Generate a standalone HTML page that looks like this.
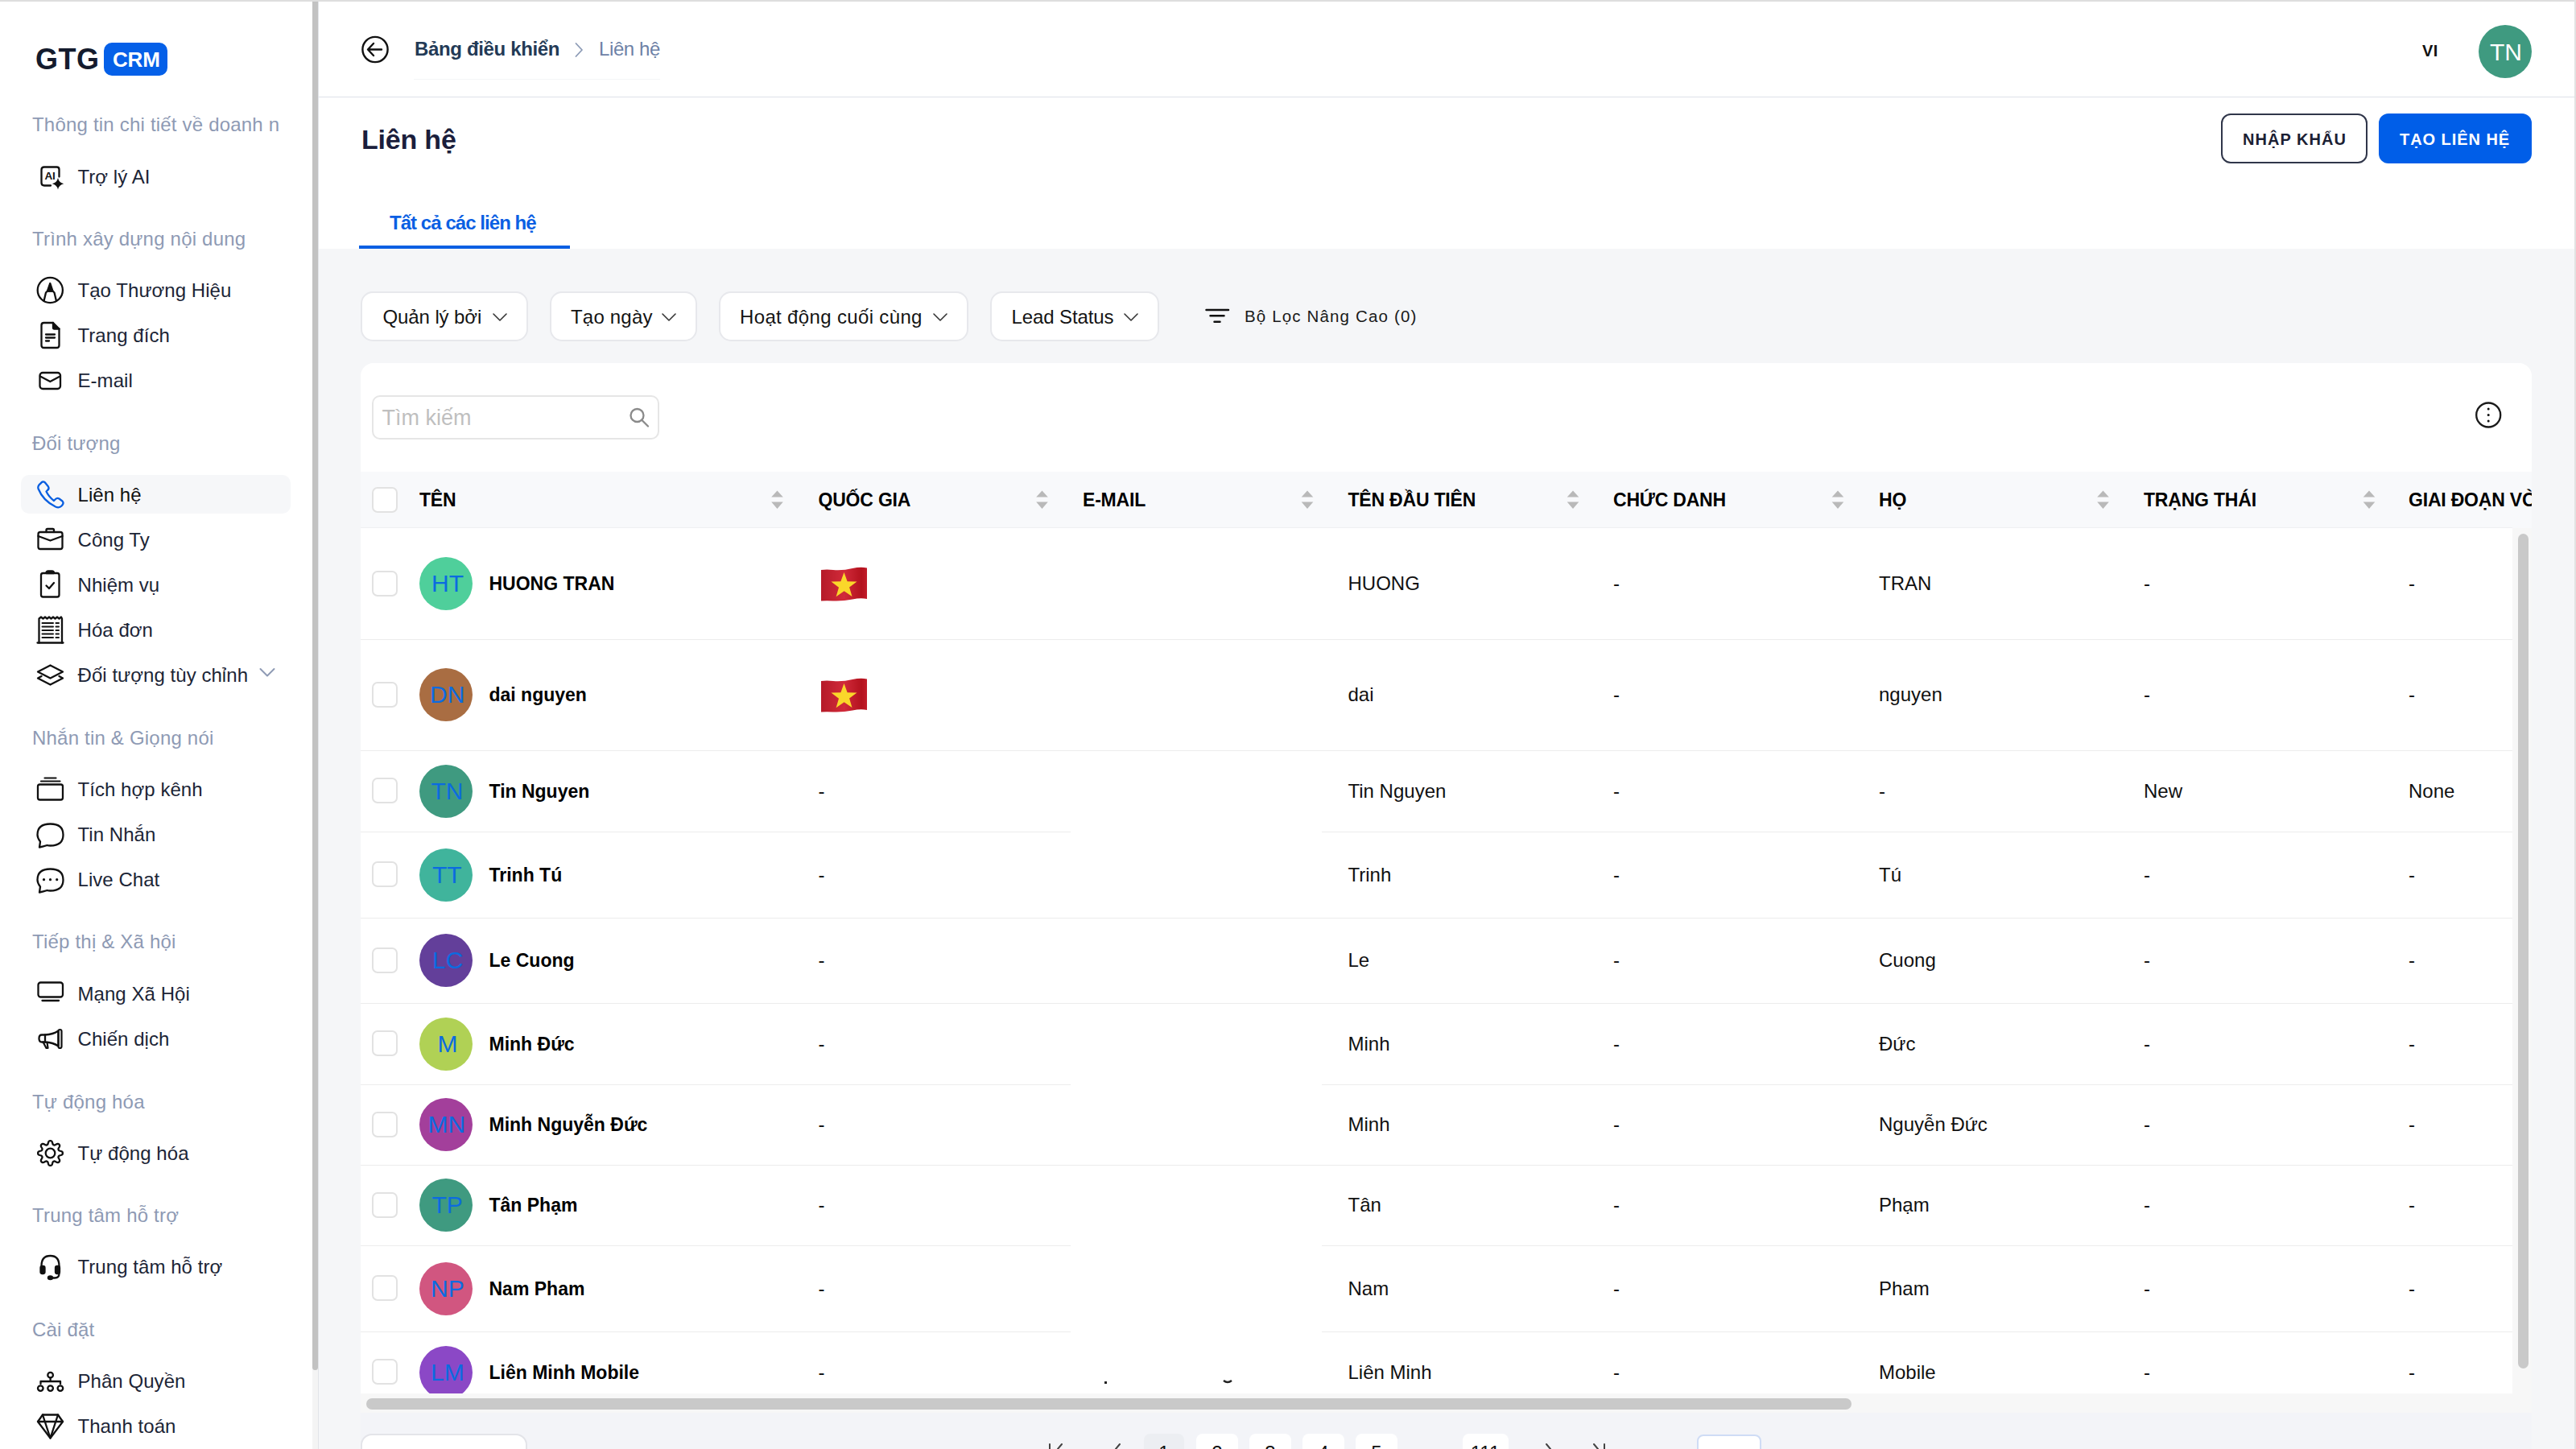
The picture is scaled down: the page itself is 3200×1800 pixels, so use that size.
<!DOCTYPE html>
<html><head><meta charset="utf-8"><title>Liên hệ - GTG CRM</title>
<style>
html,body{margin:0;padding:0;width:3200px;height:1800px;overflow:hidden;background:#fff}
body{position:relative;font-family:"Liberation Sans", sans-serif}
.a{position:absolute}
.t{position:absolute;white-space:nowrap}
</style></head><body>
<div class="a" style="left:0px;top:0px;width:3200px;height:1800px;background:#fff"></div>
<div class="a" style="left:396px;top:309px;width:2802px;height:1491px;background:#f5f6f8"></div>
<div class="a" style="left:0px;top:0px;width:3200px;height:2px;background:#dedede"></div>
<div class="a" style="left:3198px;top:0px;width:2px;height:1800px;background:#e2e2e2"></div>
<div class="a" style="left:388px;top:2px;width:7px;height:1798px;background:#f4f4f4"></div>
<div class="a" style="left:395px;top:2px;width:1px;height:1798px;background:#e2e4e9"></div>
<div class="a" style="left:388px;top:2px;width:7px;height:1700px;background:#c2c2c2;border-radius:0 0 4px 4px"></div>
<div class="t" style="left:44.0px;top:56.1px;font-size:36px;line-height:36px;font-weight:700;color:#141b2d;letter-spacing:0.5px;">GTG</div>
<div class="a" style="left:129px;top:53px;width:79px;height:41px;background:#0560e8;border-radius:10px"></div>
<div class="t" style="left:140.0px;top:61.0px;font-size:26px;line-height:26px;font-weight:700;color:#fff;letter-spacing:-0.2px;">CRM</div>
<div class="t" style="left:40.0px;top:142.8px;font-size:24px;line-height:24px;font-weight:400;color:#8e9ab4;letter-spacing:0.2px;">Thông tin chi tiết về doanh n</div>
<div class="t" style="left:96.5px;top:207.6px;font-size:24px;line-height:24px;font-weight:400;color:#1c2536;letter-spacing:0.05px;">Trợ lý AI</div>
<div class="t" style="left:40.0px;top:284.8px;font-size:24px;line-height:24px;font-weight:400;color:#8e9ab4;letter-spacing:0.2px;">Trình xây dựng nội dung</div>
<div class="t" style="left:96.5px;top:348.8px;font-size:24px;line-height:24px;font-weight:400;color:#1c2536;letter-spacing:0.05px;">Tạo Thương Hiệu</div>
<div class="t" style="left:96.5px;top:404.6px;font-size:24px;line-height:24px;font-weight:400;color:#1c2536;letter-spacing:0.05px;">Trang đích</div>
<div class="t" style="left:96.5px;top:460.6px;font-size:24px;line-height:24px;font-weight:400;color:#1c2536;letter-spacing:0.05px;">E-mail</div>
<div class="t" style="left:40.0px;top:538.8px;font-size:24px;line-height:24px;font-weight:400;color:#8e9ab4;letter-spacing:0.2px;">Đối tượng</div>
<div class="a" style="left:26px;top:590px;width:335px;height:48px;background:#f6f7f9;border-radius:10px"></div>
<div class="t" style="left:96.5px;top:602.9px;font-size:24px;line-height:24px;font-weight:400;color:#111;letter-spacing:0.05px;">Liên hệ</div>
<div class="t" style="left:96.5px;top:659.3px;font-size:24px;line-height:24px;font-weight:400;color:#1c2536;letter-spacing:0.05px;">Công Ty</div>
<div class="t" style="left:96.5px;top:715.3px;font-size:24px;line-height:24px;font-weight:400;color:#1c2536;letter-spacing:0.05px;">Nhiệm vụ</div>
<div class="t" style="left:96.5px;top:770.8px;font-size:24px;line-height:24px;font-weight:400;color:#1c2536;letter-spacing:0.05px;">Hóa đơn</div>
<div class="t" style="left:96.5px;top:826.6px;font-size:24px;line-height:24px;font-weight:400;color:#1c2536;letter-spacing:0.05px;">Đối tượng tùy chỉnh</div>
<div class="t" style="left:40.0px;top:904.5px;font-size:24px;line-height:24px;font-weight:400;color:#8e9ab4;letter-spacing:0.2px;">Nhắn tin &amp; Giọng nói</div>
<div class="t" style="left:96.5px;top:968.8px;font-size:24px;line-height:24px;font-weight:400;color:#1c2536;letter-spacing:0.05px;">Tích hợp kênh</div>
<div class="t" style="left:96.5px;top:1024.8px;font-size:24px;line-height:24px;font-weight:400;color:#1c2536;letter-spacing:0.05px;">Tin Nhắn</div>
<div class="t" style="left:96.5px;top:1080.8px;font-size:24px;line-height:24px;font-weight:400;color:#1c2536;letter-spacing:0.05px;">Live Chat</div>
<div class="t" style="left:40.0px;top:1158.3px;font-size:24px;line-height:24px;font-weight:400;color:#8e9ab4;letter-spacing:0.2px;">Tiếp thị &amp; Xã hội</div>
<div class="t" style="left:96.5px;top:1222.8px;font-size:24px;line-height:24px;font-weight:400;color:#1c2536;letter-spacing:0.05px;">Mạng Xã Hội</div>
<div class="t" style="left:96.5px;top:1278.9px;font-size:24px;line-height:24px;font-weight:400;color:#1c2536;letter-spacing:0.05px;">Chiến dịch</div>
<div class="t" style="left:40.0px;top:1356.5px;font-size:24px;line-height:24px;font-weight:400;color:#8e9ab4;letter-spacing:0.2px;">Tự động hóa</div>
<div class="t" style="left:96.5px;top:1420.8px;font-size:24px;line-height:24px;font-weight:400;color:#1c2536;letter-spacing:0.05px;">Tự động hóa</div>
<div class="t" style="left:40.0px;top:1498.0px;font-size:24px;line-height:24px;font-weight:400;color:#8e9ab4;letter-spacing:0.2px;">Trung tâm hỗ trợ</div>
<div class="t" style="left:96.5px;top:1561.8px;font-size:24px;line-height:24px;font-weight:400;color:#1c2536;letter-spacing:0.05px;">Trung tâm hỗ trợ</div>
<div class="t" style="left:40.0px;top:1640.0px;font-size:24px;line-height:24px;font-weight:400;color:#8e9ab4;letter-spacing:0.2px;">Cài đặt</div>
<div class="t" style="left:96.5px;top:1703.8px;font-size:24px;line-height:24px;font-weight:400;color:#1c2536;letter-spacing:0.05px;">Phân Quyền</div>
<div class="t" style="left:96.5px;top:1759.9px;font-size:24px;line-height:24px;font-weight:400;color:#1c2536;letter-spacing:0.05px;">Thanh toán</div>
<svg class="a" style="left:40px;top:195px;" width="50" height="45" viewBox="40 195 50 45" fill="none" stroke="#111" stroke-width="2.3" stroke-linecap="round" stroke-linejoin="round"><path d="M63 230.5 H55 Q51.5 230.5 51.5 227 V211 Q51.5 207.5 55 207.5 H70.5 Q73.5 207.5 73.5 210.5 V219.5"/><text x="55.6" y="223.3" font-family="Liberation Sans" font-size="13.5" font-weight="700" fill="#111" stroke="none" letter-spacing="-0.3">AI</text><path d="M72 221 Q73.3 227 79.2 228.2 Q73.3 229.4 72 235.4 Q70.7 229.4 64.8 228.2 Q70.7 227 72 221Z" fill="#111" stroke="none"/></svg>
<svg class="a" style="left:40px;top:340px;" width="50" height="45" viewBox="40 340 50 45" fill="none" stroke="#111" stroke-width="2.3" stroke-linecap="round" stroke-linejoin="round"><circle cx="62.3" cy="360.5" r="15.6"/><path d="M54.5 374 L57 363.5 L59 361.5 H65.5 L67.5 363.5 L70 374"/><path d="M59 361.5 L62.3 352 L65.5 361.5Z" fill="#111"/></svg>
<svg class="a" style="left:40px;top:395px;" width="50" height="45" viewBox="40 395 50 45" fill="none" stroke="#111" stroke-width="2.3" stroke-linecap="round" stroke-linejoin="round"><path d="M56 401 H66 L73.5 408.5 V429 Q73.5 432 70.5 432 H54.5 Q51.5 432 51.5 429 V404 Q51.5 401 54.5 401Z"/><path d="M66 401 V407 Q66 408.5 67.5 408.5 H73.5" fill="#111"/><path d="M57 415.5 H68 M57 419.5 H68 M57 423.5 H61"/></svg>
<svg class="a" style="left:40px;top:455px;" width="50" height="35" viewBox="40 455 50 35" fill="none" stroke="#111" stroke-width="2.3" stroke-linecap="round" stroke-linejoin="round"><rect x="49.5" y="463" width="25.5" height="20" rx="3.5"/><path d="M50 467.5 L62.3 474 L74.5 467.5"/></svg>
<svg class="a" style="left:40px;top:592px;" width="50" height="45" viewBox="40 592 50 45" fill="none" stroke="#111" stroke-width="2.3" stroke-linecap="round" stroke-linejoin="round"><path d="M50.5 600.5 Q53 597 56 599.5 L60 604.5 Q61.5 607 59 609 L57.5 610.5 Q60.5 617 67 622 L69 620 Q71 618 73.5 619.5 L77.5 622.5 Q80 625 76.5 628.5 Q73.5 631.5 69 629.5 Q53.5 622 47.5 607 Q46.5 603.5 50.5 600.5Z" stroke="#0a5fe0"/></svg>
<svg class="a" style="left:40px;top:650px;" width="50" height="40" viewBox="40 650 50 40" fill="none" stroke="#111" stroke-width="2.3" stroke-linecap="round" stroke-linejoin="round"><rect x="47.5" y="661" width="30" height="21" rx="2.5"/><path d="M57.5 661 V658.5 Q57.5 657 59 657 H65.5 Q67 657 67 658.5 V661"/><path d="M47.5 666 L62.5 671.5 L77.5 666"/></svg>
<svg class="a" style="left:40px;top:705px;" width="50" height="45" viewBox="40 705 50 45" fill="none" stroke="#111" stroke-width="2.3" stroke-linecap="round" stroke-linejoin="round"><rect x="51" y="712" width="22.5" height="29.5" rx="2.5"/><path d="M57.5 712 Q57.5 709.5 60 709.5 H64.5 Q67 709.5 67 712Z" fill="#111"/><path d="M57.5 727.5 L61 731 L67 724"/></svg>
<svg class="a" style="left:40px;top:762px;" width="50" height="42" viewBox="40 762 50 42" fill="none" stroke="#111" stroke-width="2.3" stroke-linecap="round" stroke-linejoin="round"><path d="M48.5 798.5 V768.5 L51 766.5 L53.5 768.5 L56 766.5 L58.5 768.5 L61 766.5 L63.5 768.5 L66 766.5 L68.5 768.5 L71 766.5 L73.5 768.5 L76 766.5 L77 768.5 V798.5"/><path d="M46.5 798.5 H78.5"/><path d="M52.5 774 H66 M52.5 778.5 H66 M52.5 783 H66 M52.5 787.5 H66 M52.5 792 H66 M69.5 774 H73 M69.5 778.5 H73 M69.5 783 H73 M69.5 787.5 H73 M69.5 792 H73" stroke-width="2"/></svg>
<svg class="a" style="left:40px;top:820px;" width="50" height="38" viewBox="40 820 50 38" fill="none" stroke="#111" stroke-width="2.3" stroke-linecap="round" stroke-linejoin="round"><path d="M62.5 826.5 L78 834.5 L62.5 842.5 L47 834.5Z"/><path d="M51.5 840 L47 842.5 L62.5 850.5 L78 842.5 L73.5 840"/></svg>
<svg class="a" style="left:315px;top:825px;" width="35" height="25" viewBox="315 825 35 25" fill="none" stroke="#111" stroke-width="2.3" stroke-linecap="round" stroke-linejoin="round"><path d="M323.5 831 L332 839.5 L340.5 831" stroke="#8e9ab4" stroke-width="2"/></svg>
<svg class="a" style="left:40px;top:960px;" width="50" height="40" viewBox="40 960 50 40" fill="none" stroke="#111" stroke-width="2.3" stroke-linecap="round" stroke-linejoin="round"><rect x="47" y="974.5" width="31" height="19" rx="2.5"/><path d="M55.5 966.5 H69.5 M51 970.5 H74.5" stroke-width="2.2"/></svg>
<svg class="a" style="left:40px;top:1018px;" width="50" height="40" viewBox="40 1018 50 40" fill="none" stroke="#111" stroke-width="2.3" stroke-linecap="round" stroke-linejoin="round"><path d="M50 1045.5 Q46.5 1041 46.5 1037 Q46.5 1023.5 62.5 1023.5 Q78.5 1023.5 78.5 1037 Q78.5 1050.5 62.5 1050.5 Q60 1050.5 58.5 1050 Q54 1051.5 49 1052.5 Z"/></svg>
<svg class="a" style="left:40px;top:1074px;" width="50" height="40" viewBox="40 1074 50 40" fill="none" stroke="#111" stroke-width="2.3" stroke-linecap="round" stroke-linejoin="round"><path d="M50 1101.5 Q46.5 1097 46.5 1093 Q46.5 1079.5 62.5 1079.5 Q78.5 1079.5 78.5 1093 Q78.5 1106.5 62.5 1106.5 Q60 1106.5 58.5 1106 Q54 1107.5 49 1108.5 Z"/><circle cx="54.5" cy="1092.7" r="1.6" fill="#111" stroke="none"/><circle cx="62.5" cy="1092.7" r="1.6" fill="#111" stroke="none"/><circle cx="70.7" cy="1092.7" r="1.6" fill="#111" stroke="none"/></svg>
<svg class="a" style="left:40px;top:1212px;" width="50" height="40" viewBox="40 1212 50 40" fill="none" stroke="#111" stroke-width="2.3" stroke-linecap="round" stroke-linejoin="round"><rect x="47.5" y="1220.5" width="30.5" height="18" rx="3"/><path d="M52.5 1243 H73"/></svg>
<svg class="a" style="left:40px;top:1272px;" width="50" height="38" viewBox="40 1272 50 38" fill="none" stroke="#111" stroke-width="2.3" stroke-linecap="round" stroke-linejoin="round"><path d="M56 1285.5 H52 Q48.5 1285.5 48.5 1290 Q48.5 1294.5 52 1294.5 H56 Z"/><path d="M56 1285.5 Q66 1285 72.5 1280.5 V1299.5 Q66 1295 56 1294.5"/><rect x="72.5" y="1279" width="4" height="23" rx="2" stroke-width="2.2"/><path d="M53.5 1294.5 L57.5 1302 H59.5 L58.5 1294.8" stroke-width="2.2"/></svg>
<svg class="a" style="left:40px;top:1410px;" width="50" height="45" viewBox="40 1410 50 45" fill="none" stroke="#111" stroke-width="2.3" stroke-linecap="round" stroke-linejoin="round"><path d="M77.90 1432.50 L77.86 1432.98 L77.75 1433.46 L77.52 1433.92 L77.12 1434.35 L76.50 1434.72 L75.67 1435.01 L74.79 1435.25 L74.04 1435.46 L73.51 1435.70 L73.15 1435.96 L72.91 1436.25 L72.73 1436.55 L72.60 1436.87 L72.51 1437.21 L72.48 1437.59 L72.55 1438.02 L72.76 1438.57 L73.13 1439.25 L73.59 1440.04 L73.97 1440.83 L74.14 1441.53 L74.12 1442.12 L73.96 1442.60 L73.71 1443.02 L73.39 1443.39 L73.02 1443.71 L72.60 1443.96 L72.12 1444.12 L71.53 1444.14 L70.83 1443.97 L70.04 1443.59 L69.25 1443.13 L68.57 1442.76 L68.02 1442.55 L67.59 1442.48 L67.21 1442.51 L66.87 1442.60 L66.55 1442.73 L66.25 1442.91 L65.96 1443.15 L65.70 1443.51 L65.46 1444.04 L65.25 1444.79 L65.01 1445.67 L64.72 1446.50 L64.35 1447.12 L63.92 1447.52 L63.46 1447.75 L62.98 1447.86 L62.50 1447.90 L62.02 1447.86 L61.54 1447.75 L61.08 1447.52 L60.65 1447.12 L60.28 1446.50 L59.99 1445.67 L59.75 1444.79 L59.54 1444.04 L59.30 1443.51 L59.04 1443.15 L58.75 1442.91 L58.45 1442.73 L58.13 1442.60 L57.79 1442.51 L57.41 1442.48 L56.98 1442.55 L56.43 1442.76 L55.75 1443.13 L54.96 1443.59 L54.17 1443.97 L53.47 1444.14 L52.88 1444.12 L52.40 1443.96 L51.98 1443.71 L51.61 1443.39 L51.29 1443.02 L51.04 1442.60 L50.88 1442.12 L50.86 1441.53 L51.03 1440.83 L51.41 1440.04 L51.87 1439.25 L52.24 1438.57 L52.45 1438.02 L52.52 1437.59 L52.49 1437.21 L52.40 1436.87 L52.27 1436.55 L52.09 1436.25 L51.85 1435.96 L51.49 1435.70 L50.96 1435.46 L50.21 1435.25 L49.33 1435.01 L48.50 1434.72 L47.88 1434.35 L47.48 1433.92 L47.25 1433.46 L47.14 1432.98 L47.10 1432.50 L47.14 1432.02 L47.25 1431.54 L47.48 1431.08 L47.88 1430.65 L48.50 1430.28 L49.33 1429.99 L50.21 1429.75 L50.96 1429.54 L51.49 1429.30 L51.85 1429.04 L52.09 1428.75 L52.27 1428.45 L52.40 1428.13 L52.49 1427.79 L52.52 1427.41 L52.45 1426.98 L52.24 1426.43 L51.87 1425.75 L51.41 1424.96 L51.03 1424.17 L50.86 1423.47 L50.88 1422.88 L51.04 1422.40 L51.29 1421.98 L51.61 1421.61 L51.98 1421.29 L52.40 1421.04 L52.88 1420.88 L53.47 1420.86 L54.17 1421.03 L54.96 1421.41 L55.75 1421.87 L56.43 1422.24 L56.98 1422.45 L57.41 1422.52 L57.79 1422.49 L58.13 1422.40 L58.45 1422.27 L58.75 1422.09 L59.04 1421.85 L59.30 1421.49 L59.54 1420.96 L59.75 1420.21 L59.99 1419.33 L60.28 1418.50 L60.65 1417.88 L61.08 1417.48 L61.54 1417.25 L62.02 1417.14 L62.50 1417.10 L62.98 1417.14 L63.46 1417.25 L63.92 1417.48 L64.35 1417.88 L64.72 1418.50 L65.01 1419.33 L65.25 1420.21 L65.46 1420.96 L65.70 1421.49 L65.96 1421.85 L66.25 1422.09 L66.55 1422.27 L66.87 1422.40 L67.21 1422.49 L67.59 1422.52 L68.02 1422.45 L68.57 1422.24 L69.25 1421.87 L70.04 1421.41 L70.83 1421.03 L71.53 1420.86 L72.12 1420.88 L72.60 1421.04 L73.02 1421.29 L73.39 1421.61 L73.71 1421.98 L73.96 1422.40 L74.12 1422.88 L74.14 1423.47 L73.97 1424.17 L73.59 1424.96 L73.13 1425.75 L72.76 1426.43 L72.55 1426.98 L72.48 1427.41 L72.51 1427.79 L72.60 1428.13 L72.73 1428.45 L72.91 1428.75 L73.15 1429.04 L73.51 1429.30 L74.04 1429.54 L74.79 1429.75 L75.67 1429.99 L76.50 1430.28 L77.12 1430.65 L77.52 1431.08 L77.75 1431.54 L77.86 1432.02Z"/><circle cx="62.5" cy="1432.5" r="5.8"/></svg>
<svg class="a" style="left:40px;top:1552px;" width="50" height="42" viewBox="40 1552 50 42" fill="none" stroke="#111" stroke-width="2.3" stroke-linecap="round" stroke-linejoin="round"><path d="M51.5 1580 V1572.5 Q51.5 1560 62.5 1560 Q73.5 1560 73.5 1572.5 V1582 Q73.5 1587.5 68 1587.5 H63"/><rect x="50.5" y="1573" width="5" height="9" rx="2" fill="#111"/><rect x="69" y="1573" width="5" height="9" rx="2" fill="#111"/><ellipse cx="62.5" cy="1587.3" rx="2.6" ry="1.8" fill="#111"/></svg>
<svg class="a" style="left:40px;top:1698px;" width="50" height="34" viewBox="40 1698 50 34" fill="none" stroke="#111" stroke-width="2.3" stroke-linecap="round" stroke-linejoin="round"><circle cx="62.6" cy="1708.2" r="3.3" stroke-width="2.3"/><path d="M62.6 1711.5 V1716 M50.5 1719 V1716 H75 V1719" stroke-width="2.3"/><circle cx="50.3" cy="1724.6" r="3.3" stroke-width="2.3"/><circle cx="62.6" cy="1724.6" r="3.3" stroke-width="2.3"/><circle cx="74.9" cy="1724.6" r="3.3" stroke-width="2.3"/></svg>
<svg class="a" style="left:40px;top:1750px;" width="50" height="45" viewBox="40 1750 50 45" fill="none" stroke="#111" stroke-width="2.3" stroke-linecap="round" stroke-linejoin="round"><path d="M53 1757.5 H72 L78 1766 L62.5 1786.5 L47 1766Z"/><path d="M47 1766 H78 M53 1757.5 L62.5 1786.5 L72 1757.5"/></svg>
<div class="a" style="left:395px;top:120px;width:2803px;height:1px;background:#dde1e8"></div>
<svg class="a" style="left:440px;top:40px;" width="50" height="45" viewBox="440 40 50 45" fill="none" stroke="#111" stroke-width="2.3" stroke-linecap="round" stroke-linejoin="round"><circle cx="466" cy="61.5" r="15.6" stroke-width="2.4"/><path d="M457.5 61.5 H474 M464 54 L457 61.5 L464 69" stroke-width="2.4"/></svg>
<div class="t" style="left:515.0px;top:48.7px;font-size:24px;line-height:24px;font-weight:700;color:#233a56;letter-spacing:-0.35px;">Bảng điều khiển</div>
<svg class="a" style="left:705px;top:45px;" width="30" height="35" viewBox="705 45 30 35" fill="none" stroke="#111" stroke-width="2.3" stroke-linecap="round" stroke-linejoin="round"><path d="M715.5 54 L723 62 L715.5 70" stroke="#8c9bb6" stroke-width="1.8"/></svg>
<div class="t" style="left:744.0px;top:48.7px;font-size:24px;line-height:24px;font-weight:400;color:#6d81a6;letter-spacing:-0.4px;">Liên hệ</div>
<div class="a" style="left:514px;top:98px;width:306px;height:1px;background:#f4f5f7"></div>
<div class="t" style="left:3009.0px;top:52.7px;font-size:20px;line-height:20px;font-weight:700;color:#111;letter-spacing:0.5px;">VI</div>
<div class="a" style="left:3079px;top:31px;width:66px;height:66px;background:#3f9a80;border-radius:50%"></div>
<div class="t" style="left:3093.0px;top:49.6px;font-size:30px;line-height:30px;font-weight:400;color:#fff;letter-spacing:0px;">TN</div>
<div class="t" style="left:449.0px;top:156.2px;font-size:34px;line-height:34px;font-weight:700;color:#1b1e3c;letter-spacing:-0.2px;">Liên hệ</div>
<div class="a" style="left:2759px;top:141px;width:182px;height:62px;border:2px solid #30364a;border-radius:12px;box-sizing:border-box;background:#fff"></div>
<div class="t" style="left:2786.0px;top:163.1px;font-size:20px;line-height:20px;font-weight:700;color:#1b2033;letter-spacing:1.05px;">NHẬP KHẨU</div>
<div class="a" style="left:2955px;top:141px;width:190px;height:62px;background:#005ee8;border-radius:12px"></div>
<div class="t" style="left:2981.0px;top:163.1px;font-size:20px;line-height:20px;font-weight:700;color:#fff;letter-spacing:0.95px;">TẠO LIÊN HỆ</div>
<div class="t" style="left:484.0px;top:264.7px;font-size:24px;line-height:24px;font-weight:700;color:#0b5fe3;letter-spacing:-0.95px;">Tất cả các liên hệ</div>
<div class="a" style="left:446px;top:305px;width:262px;height:4px;background:#0b5fe3"></div>
<div class="a" style="left:448px;top:362px;width:208px;height:62px;background:#fff;border:2px solid #e7e8ec;border-radius:15px;box-sizing:border-box"></div>
<div class="t" style="left:475.5px;top:382.0px;font-size:24px;line-height:24px;font-weight:400;color:#141414;letter-spacing:-0.1px;">Quản lý bởi</div>
<svg class="a" style="left:611px;top:385px;" width="22" height="20" viewBox="611 385 22 20" fill="none" stroke="#111" stroke-width="2.3" stroke-linecap="round" stroke-linejoin="round"><path d="M613 390 L621 398 L629 390" stroke="#333" stroke-width="1.6"/></svg>
<div class="a" style="left:683px;top:362px;width:183px;height:62px;background:#fff;border:2px solid #e7e8ec;border-radius:15px;box-sizing:border-box"></div>
<div class="t" style="left:709.0px;top:382.0px;font-size:24px;line-height:24px;font-weight:400;color:#141414;letter-spacing:0.2px;">Tạo ngày</div>
<svg class="a" style="left:821px;top:385px;" width="22" height="20" viewBox="821 385 22 20" fill="none" stroke="#111" stroke-width="2.3" stroke-linecap="round" stroke-linejoin="round"><path d="M823 390 L831 398 L839 390" stroke="#333" stroke-width="1.6"/></svg>
<div class="a" style="left:893px;top:362px;width:310px;height:62px;background:#fff;border:2px solid #e7e8ec;border-radius:15px;box-sizing:border-box"></div>
<div class="t" style="left:919.0px;top:382.0px;font-size:24px;line-height:24px;font-weight:400;color:#141414;letter-spacing:0.35px;">Hoạt động cuối cùng</div>
<svg class="a" style="left:1158px;top:385px;" width="22" height="20" viewBox="1158 385 22 20" fill="none" stroke="#111" stroke-width="2.3" stroke-linecap="round" stroke-linejoin="round"><path d="M1160 390 L1168 398 L1176 390" stroke="#333" stroke-width="1.6"/></svg>
<div class="a" style="left:1230px;top:362px;width:210px;height:62px;background:#fff;border:2px solid #e7e8ec;border-radius:15px;box-sizing:border-box"></div>
<div class="t" style="left:1256.5px;top:382.0px;font-size:24px;line-height:24px;font-weight:400;color:#141414;letter-spacing:-0.1px;">Lead Status</div>
<svg class="a" style="left:1395px;top:385px;" width="22" height="20" viewBox="1395 385 22 20" fill="none" stroke="#111" stroke-width="2.3" stroke-linecap="round" stroke-linejoin="round"><path d="M1397 390 L1405 398 L1413 390" stroke="#333" stroke-width="1.6"/></svg>
<svg class="a" style="left:1490px;top:378px;" width="45" height="28" viewBox="1490 378 45 28" fill="none" stroke="#111" stroke-width="2.3" stroke-linecap="round" stroke-linejoin="round"><path d="M1498.5 385 H1526 M1503.5 392.3 H1520.5 M1508.5 399.7 H1515.5" stroke-width="2.5"/></svg>
<div class="t" style="left:1546.0px;top:382.9px;font-size:20.5px;line-height:20.5px;font-weight:400;color:#1a1a1a;letter-spacing:1.15px;">Bộ Lọc Nâng Cao (0)</div>
<div class="a" style="left:448px;top:451px;width:2697px;height:135px;background:#fff;border-radius:16px 16px 0 0"></div>
<div class="a" style="left:462px;top:491px;width:357px;height:55px;background:#fff;border:2px solid #e6e6e6;border-radius:10px;box-sizing:border-box"></div>
<div class="t" style="left:474.5px;top:506.1px;font-size:27px;line-height:27px;font-weight:400;color:#bfbfbf;letter-spacing:0px;">Tìm kiếm</div>
<svg class="a" style="left:775px;top:500px;" width="40" height="40" viewBox="775 500 40 40" fill="none" stroke="#111" stroke-width="2.3" stroke-linecap="round" stroke-linejoin="round"><circle cx="791.5" cy="516" r="8" stroke="#8a8a8a" stroke-width="2.3"/><path d="M797.5 522 L805 529.5" stroke="#8a8a8a" stroke-width="2.3"/></svg>
<svg class="a" style="left:3070px;top:495px;" width="45" height="42" viewBox="3070 495 45 42" fill="none" stroke="#111" stroke-width="2.3" stroke-linecap="round" stroke-linejoin="round"><circle cx="3091.2" cy="515.5" r="15" stroke="#1a1a1a" stroke-width="2.3"/><circle cx="3091.2" cy="508" r="1.5" fill="#111" stroke="none"/><circle cx="3091.2" cy="515.5" r="1.5" fill="#111" stroke="none"/><circle cx="3091.2" cy="523" r="1.5" fill="#111" stroke="none"/></svg>
<div class="a" style="left:448px;top:586px;width:2697px;height:70px;background:#f8f9fb"></div>
<div class="a" style="left:448px;top:655px;width:2673px;height:1px;background:#eff0f2"></div>
<div class="a" style="left:462px;top:605px;width:32px;height:32px;background:#fff;border:2px solid #e2e2e2;border-radius:7px;box-sizing:border-box"></div>
<div class="t" style="left:521.0px;top:609.5px;font-size:23px;line-height:23px;font-weight:700;color:#000;letter-spacing:-0.2px;">TÊN</div>
<div class="t" style="left:1016.5px;top:609.5px;font-size:23px;line-height:23px;font-weight:700;color:#000;letter-spacing:-0.2px;">QUỐC GIA</div>
<div class="t" style="left:1345.0px;top:609.5px;font-size:23px;line-height:23px;font-weight:700;color:#000;letter-spacing:-0.2px;">E-MAIL</div>
<div class="t" style="left:1674.5px;top:609.5px;font-size:23px;line-height:23px;font-weight:700;color:#000;letter-spacing:-0.2px;">TÊN ĐẦU TIÊN</div>
<div class="t" style="left:2004.0px;top:609.5px;font-size:23px;line-height:23px;font-weight:700;color:#000;letter-spacing:-0.2px;">CHỨC DANH</div>
<div class="t" style="left:2334.0px;top:609.5px;font-size:23px;line-height:23px;font-weight:700;color:#000;letter-spacing:-0.2px;">HỌ</div>
<div class="t" style="left:2663.0px;top:609.5px;font-size:23px;line-height:23px;font-weight:700;color:#000;letter-spacing:-0.2px;">TRẠNG THÁI</div>
<div class="a" style="left:2990px;top:595px;width:155px;height:50px;overflow:hidden">
<div class="t" style="left:2px;top:14.5px;font-size:23px;line-height:23px;font-weight:700;color:#000;letter-spacing:-0.2px">GIAI ĐOẠN VÒNG ĐỜI</div>
</div>
<svg class="a" style="left:955px;top:603px;" width="20" height="34" viewBox="955 603 20 34" fill="none" stroke="#111" stroke-width="2.3" stroke-linecap="round" stroke-linejoin="round"><path d="M958.2 617.6 L965.5 609.4 L972.8 617.6Z M958.2 623.4 L965.5 632 L972.8 623.4Z" fill="#b9b9b9" stroke="none"/></svg>
<svg class="a" style="left:1284px;top:603px;" width="20" height="34" viewBox="1284 603 20 34" fill="none" stroke="#111" stroke-width="2.3" stroke-linecap="round" stroke-linejoin="round"><path d="M1287.2 617.6 L1294.5 609.4 L1301.8 617.6Z M1287.2 623.4 L1294.5 632 L1301.8 623.4Z" fill="#b9b9b9" stroke="none"/></svg>
<svg class="a" style="left:1614px;top:603px;" width="20" height="34" viewBox="1614 603 20 34" fill="none" stroke="#111" stroke-width="2.3" stroke-linecap="round" stroke-linejoin="round"><path d="M1616.7 617.6 L1624 609.4 L1631.3 617.6Z M1616.7 623.4 L1624 632 L1631.3 623.4Z" fill="#b9b9b9" stroke="none"/></svg>
<svg class="a" style="left:1944px;top:603px;" width="20" height="34" viewBox="1944 603 20 34" fill="none" stroke="#111" stroke-width="2.3" stroke-linecap="round" stroke-linejoin="round"><path d="M1946.7 617.6 L1954 609.4 L1961.3 617.6Z M1946.7 623.4 L1954 632 L1961.3 623.4Z" fill="#b9b9b9" stroke="none"/></svg>
<svg class="a" style="left:2273px;top:603px;" width="20" height="34" viewBox="2273 603 20 34" fill="none" stroke="#111" stroke-width="2.3" stroke-linecap="round" stroke-linejoin="round"><path d="M2275.7 617.6 L2283 609.4 L2290.3 617.6Z M2275.7 623.4 L2283 632 L2290.3 623.4Z" fill="#b9b9b9" stroke="none"/></svg>
<svg class="a" style="left:2602px;top:603px;" width="20" height="34" viewBox="2602 603 20 34" fill="none" stroke="#111" stroke-width="2.3" stroke-linecap="round" stroke-linejoin="round"><path d="M2605.2 617.6 L2612.5 609.4 L2619.8 617.6Z M2605.2 623.4 L2612.5 632 L2619.8 623.4Z" fill="#b9b9b9" stroke="none"/></svg>
<svg class="a" style="left:2933px;top:603px;" width="20" height="34" viewBox="2933 603 20 34" fill="none" stroke="#111" stroke-width="2.3" stroke-linecap="round" stroke-linejoin="round"><path d="M2935.7 617.6 L2943 609.4 L2950.3 617.6Z M2935.7 623.4 L2943 632 L2950.3 623.4Z" fill="#b9b9b9" stroke="none"/></svg>
<div class="a" style="left:448px;top:656px;width:2673px;height:1075px;background:#fff;overflow:hidden">
<div class="a" style="left:0px;top:138px;width:2673px;height:1px;background:#ececec"></div>
<div class="a" style="left:14px;top:53px;width:32px;height:32px;background:#fff;border:2px solid #e2e2e2;border-radius:7px;box-sizing:border-box"></div>
<div class="a" style="left:73px;top:36px;width:66px;height:66px;background:#4fcf9b;border-radius:50%"></div>
<div class="t" style="left:88.0px;top:54.1px;font-size:30px;line-height:30px;font-weight:400;color:#0b6be0;letter-spacing:0px">HT</div>
<div class="t" style="left:159.5px;top:58.0px;font-size:23px;line-height:23px;font-weight:700;color:#000;letter-spacing:0px">HUONG TRAN</div>
<svg class="a" style="left:571px;top:47px" width="60" height="46" viewBox="0 0 60 46"><defs><linearGradient id="fg0" x1="0" x2="1" y1="0" y2="0"><stop offset="0" stop-color="#b51a28"/><stop offset="0.5" stop-color="#d12a3a"/><stop offset="0.88" stop-color="#b3121e"/><stop offset="1" stop-color="#c21c2a"/></linearGradient></defs><path d="M1 5 Q8 4 16 5 Q28 6 40 3 Q50 1 58 2.5 V41 Q50 39.5 40 41.5 Q28 44 16 43.5 Q8 43 1 43.5Z" fill="url(#fg0)"/><path d="M29.5 8 L33.6 19.2 L45.5 19.4 L36.1 26.6 L39.5 38 L29.6 31.2 L19.6 38.2 L23 26.8 L13.5 19.5 L25.4 19.2Z" fill="#fad72a"/></svg>
<div class="t" style="left:1226.5px;top:57.2px;font-size:24px;line-height:24px;font-weight:400;color:#111;letter-spacing:0px">HUONG</div>
<div class="t" style="left:1556.0px;top:57.2px;font-size:24px;line-height:24px;font-weight:400;color:#111;letter-spacing:0px">-</div>
<div class="t" style="left:1886.0px;top:57.2px;font-size:24px;line-height:24px;font-weight:400;color:#111;letter-spacing:0px">TRAN</div>
<div class="t" style="left:2215.0px;top:57.2px;font-size:24px;line-height:24px;font-weight:400;color:#111;letter-spacing:0px">-</div>
<div class="t" style="left:2544.0px;top:57.2px;font-size:24px;line-height:24px;font-weight:400;color:#111;letter-spacing:0px">-</div>
<div class="a" style="left:0px;top:276px;width:2673px;height:1px;background:#ececec"></div>
<div class="a" style="left:14px;top:191px;width:32px;height:32px;background:#fff;border:2px solid #e2e2e2;border-radius:7px;box-sizing:border-box"></div>
<div class="a" style="left:73px;top:174px;width:66px;height:66px;background:#a96d42;border-radius:50%"></div>
<div class="t" style="left:86.0px;top:192.1px;font-size:30px;line-height:30px;font-weight:400;color:#0b6be0;letter-spacing:0px">DN</div>
<div class="t" style="left:159.5px;top:196.0px;font-size:23px;line-height:23px;font-weight:700;color:#000;letter-spacing:0px">dai nguyen</div>
<svg class="a" style="left:571px;top:185px" width="60" height="46" viewBox="0 0 60 46"><defs><linearGradient id="fg1" x1="0" x2="1" y1="0" y2="0"><stop offset="0" stop-color="#b51a28"/><stop offset="0.5" stop-color="#d12a3a"/><stop offset="0.88" stop-color="#b3121e"/><stop offset="1" stop-color="#c21c2a"/></linearGradient></defs><path d="M1 5 Q8 4 16 5 Q28 6 40 3 Q50 1 58 2.5 V41 Q50 39.5 40 41.5 Q28 44 16 43.5 Q8 43 1 43.5Z" fill="url(#fg1)"/><path d="M29.5 8 L33.6 19.2 L45.5 19.4 L36.1 26.6 L39.5 38 L29.6 31.2 L19.6 38.2 L23 26.8 L13.5 19.5 L25.4 19.2Z" fill="#fad72a"/></svg>
<div class="t" style="left:1226.5px;top:195.2px;font-size:24px;line-height:24px;font-weight:400;color:#111;letter-spacing:0px">dai</div>
<div class="t" style="left:1556.0px;top:195.2px;font-size:24px;line-height:24px;font-weight:400;color:#111;letter-spacing:0px">-</div>
<div class="t" style="left:1886.0px;top:195.2px;font-size:24px;line-height:24px;font-weight:400;color:#111;letter-spacing:0px">nguyen</div>
<div class="t" style="left:2215.0px;top:195.2px;font-size:24px;line-height:24px;font-weight:400;color:#111;letter-spacing:0px">-</div>
<div class="t" style="left:2544.0px;top:195.2px;font-size:24px;line-height:24px;font-weight:400;color:#111;letter-spacing:0px">-</div>
<div class="a" style="left:0px;top:377px;width:882px;height:1px;background:#ececec"></div>
<div class="a" style="left:1194px;top:377px;width:1479px;height:1px;background:#ececec"></div>
<div class="a" style="left:14px;top:310px;width:32px;height:32px;background:#fff;border:2px solid #e2e2e2;border-radius:7px;box-sizing:border-box"></div>
<div class="a" style="left:73px;top:294px;width:66px;height:66px;background:#3f9a80;border-radius:50%"></div>
<div class="t" style="left:87.5px;top:311.6px;font-size:30px;line-height:30px;font-weight:400;color:#0b6be0;letter-spacing:0px">TN</div>
<div class="t" style="left:159.5px;top:315.5px;font-size:23px;line-height:23px;font-weight:700;color:#000;letter-spacing:0px">Tin Nguyen</div>
<div class="t" style="left:568.5px;top:314.7px;font-size:24px;line-height:24px;font-weight:400;color:#111;letter-spacing:0px">-</div>
<div class="t" style="left:1226.5px;top:314.7px;font-size:24px;line-height:24px;font-weight:400;color:#111;letter-spacing:0px">Tin Nguyen</div>
<div class="t" style="left:1556.0px;top:314.7px;font-size:24px;line-height:24px;font-weight:400;color:#111;letter-spacing:0px">-</div>
<div class="t" style="left:1886.0px;top:314.7px;font-size:24px;line-height:24px;font-weight:400;color:#111;letter-spacing:0px">-</div>
<div class="t" style="left:2215.0px;top:314.7px;font-size:24px;line-height:24px;font-weight:400;color:#111;letter-spacing:0px">New</div>
<div class="t" style="left:2544.0px;top:314.7px;font-size:24px;line-height:24px;font-weight:400;color:#111;letter-spacing:0px">None</div>
<div class="a" style="left:0px;top:484px;width:2673px;height:1px;background:#ececec"></div>
<div class="a" style="left:14px;top:414px;width:32px;height:32px;background:#fff;border:2px solid #e2e2e2;border-radius:7px;box-sizing:border-box"></div>
<div class="a" style="left:73px;top:398px;width:66px;height:66px;background:#40b49c;border-radius:50%"></div>
<div class="t" style="left:89.0px;top:415.6px;font-size:30px;line-height:30px;font-weight:400;color:#0b6be0;letter-spacing:0px">TT</div>
<div class="t" style="left:159.5px;top:419.5px;font-size:23px;line-height:23px;font-weight:700;color:#000;letter-spacing:0px">Trinh Tú</div>
<div class="t" style="left:568.5px;top:418.7px;font-size:24px;line-height:24px;font-weight:400;color:#111;letter-spacing:0px">-</div>
<div class="t" style="left:1226.5px;top:418.7px;font-size:24px;line-height:24px;font-weight:400;color:#111;letter-spacing:0px">Trinh</div>
<div class="t" style="left:1556.0px;top:418.7px;font-size:24px;line-height:24px;font-weight:400;color:#111;letter-spacing:0px">-</div>
<div class="t" style="left:1886.0px;top:418.7px;font-size:24px;line-height:24px;font-weight:400;color:#111;letter-spacing:0px">Tú</div>
<div class="t" style="left:2215.0px;top:418.7px;font-size:24px;line-height:24px;font-weight:400;color:#111;letter-spacing:0px">-</div>
<div class="t" style="left:2544.0px;top:418.7px;font-size:24px;line-height:24px;font-weight:400;color:#111;letter-spacing:0px">-</div>
<div class="a" style="left:0px;top:590px;width:2673px;height:1px;background:#ececec"></div>
<div class="a" style="left:14px;top:521px;width:32px;height:32px;background:#fff;border:2px solid #e2e2e2;border-radius:7px;box-sizing:border-box"></div>
<div class="a" style="left:73px;top:504px;width:66px;height:66px;background:#633f9a;border-radius:50%"></div>
<div class="t" style="left:89.0px;top:522.1px;font-size:30px;line-height:30px;font-weight:400;color:#0b6be0;letter-spacing:0px">LC</div>
<div class="t" style="left:159.5px;top:526.0px;font-size:23px;line-height:23px;font-weight:700;color:#000;letter-spacing:0px">Le Cuong</div>
<div class="t" style="left:568.5px;top:525.2px;font-size:24px;line-height:24px;font-weight:400;color:#111;letter-spacing:0px">-</div>
<div class="t" style="left:1226.5px;top:525.2px;font-size:24px;line-height:24px;font-weight:400;color:#111;letter-spacing:0px">Le</div>
<div class="t" style="left:1556.0px;top:525.2px;font-size:24px;line-height:24px;font-weight:400;color:#111;letter-spacing:0px">-</div>
<div class="t" style="left:1886.0px;top:525.2px;font-size:24px;line-height:24px;font-weight:400;color:#111;letter-spacing:0px">Cuong</div>
<div class="t" style="left:2215.0px;top:525.2px;font-size:24px;line-height:24px;font-weight:400;color:#111;letter-spacing:0px">-</div>
<div class="t" style="left:2544.0px;top:525.2px;font-size:24px;line-height:24px;font-weight:400;color:#111;letter-spacing:0px">-</div>
<div class="a" style="left:0px;top:691px;width:882px;height:1px;background:#ececec"></div>
<div class="a" style="left:1194px;top:691px;width:1479px;height:1px;background:#ececec"></div>
<div class="a" style="left:14px;top:624px;width:32px;height:32px;background:#fff;border:2px solid #e2e2e2;border-radius:7px;box-sizing:border-box"></div>
<div class="a" style="left:73px;top:608px;width:66px;height:66px;background:#b0d155;border-radius:50%"></div>
<div class="t" style="left:95.5px;top:625.6px;font-size:30px;line-height:30px;font-weight:400;color:#0b6be0;letter-spacing:0px">M</div>
<div class="t" style="left:159.5px;top:629.5px;font-size:23px;line-height:23px;font-weight:700;color:#000;letter-spacing:0px">Minh Đức</div>
<div class="t" style="left:568.5px;top:628.7px;font-size:24px;line-height:24px;font-weight:400;color:#111;letter-spacing:0px">-</div>
<div class="t" style="left:1226.5px;top:628.7px;font-size:24px;line-height:24px;font-weight:400;color:#111;letter-spacing:0px">Minh</div>
<div class="t" style="left:1556.0px;top:628.7px;font-size:24px;line-height:24px;font-weight:400;color:#111;letter-spacing:0px">-</div>
<div class="t" style="left:1886.0px;top:628.7px;font-size:24px;line-height:24px;font-weight:400;color:#111;letter-spacing:0px">Đức</div>
<div class="t" style="left:2215.0px;top:628.7px;font-size:24px;line-height:24px;font-weight:400;color:#111;letter-spacing:0px">-</div>
<div class="t" style="left:2544.0px;top:628.7px;font-size:24px;line-height:24px;font-weight:400;color:#111;letter-spacing:0px">-</div>
<div class="a" style="left:0px;top:791px;width:2673px;height:1px;background:#ececec"></div>
<div class="a" style="left:14px;top:725px;width:32px;height:32px;background:#fff;border:2px solid #e2e2e2;border-radius:7px;box-sizing:border-box"></div>
<div class="a" style="left:73px;top:708px;width:66px;height:66px;background:#a33f9b;border-radius:50%"></div>
<div class="t" style="left:83.5px;top:726.1px;font-size:30px;line-height:30px;font-weight:400;color:#0b6be0;letter-spacing:0px">MN</div>
<div class="t" style="left:159.5px;top:730.0px;font-size:23px;line-height:23px;font-weight:700;color:#000;letter-spacing:0px">Minh Nguyễn Đức</div>
<div class="t" style="left:568.5px;top:729.2px;font-size:24px;line-height:24px;font-weight:400;color:#111;letter-spacing:0px">-</div>
<div class="t" style="left:1226.5px;top:729.2px;font-size:24px;line-height:24px;font-weight:400;color:#111;letter-spacing:0px">Minh</div>
<div class="t" style="left:1556.0px;top:729.2px;font-size:24px;line-height:24px;font-weight:400;color:#111;letter-spacing:0px">-</div>
<div class="t" style="left:1886.0px;top:729.2px;font-size:24px;line-height:24px;font-weight:400;color:#111;letter-spacing:0px">Nguyễn Đức</div>
<div class="t" style="left:2215.0px;top:729.2px;font-size:24px;line-height:24px;font-weight:400;color:#111;letter-spacing:0px">-</div>
<div class="t" style="left:2544.0px;top:729.2px;font-size:24px;line-height:24px;font-weight:400;color:#111;letter-spacing:0px">-</div>
<div class="a" style="left:0px;top:891px;width:882px;height:1px;background:#ececec"></div>
<div class="a" style="left:1194px;top:891px;width:1479px;height:1px;background:#ececec"></div>
<div class="a" style="left:14px;top:825px;width:32px;height:32px;background:#fff;border:2px solid #e2e2e2;border-radius:7px;box-sizing:border-box"></div>
<div class="a" style="left:73px;top:808px;width:66px;height:66px;background:#3f9a80;border-radius:50%"></div>
<div class="t" style="left:88.5px;top:826.1px;font-size:30px;line-height:30px;font-weight:400;color:#0b6be0;letter-spacing:0px">TP</div>
<div class="t" style="left:159.5px;top:830.0px;font-size:23px;line-height:23px;font-weight:700;color:#000;letter-spacing:0px">Tân Phạm</div>
<div class="t" style="left:568.5px;top:829.2px;font-size:24px;line-height:24px;font-weight:400;color:#111;letter-spacing:0px">-</div>
<div class="t" style="left:1226.5px;top:829.2px;font-size:24px;line-height:24px;font-weight:400;color:#111;letter-spacing:0px">Tân</div>
<div class="t" style="left:1556.0px;top:829.2px;font-size:24px;line-height:24px;font-weight:400;color:#111;letter-spacing:0px">-</div>
<div class="t" style="left:1886.0px;top:829.2px;font-size:24px;line-height:24px;font-weight:400;color:#111;letter-spacing:0px">Phạm</div>
<div class="t" style="left:2215.0px;top:829.2px;font-size:24px;line-height:24px;font-weight:400;color:#111;letter-spacing:0px">-</div>
<div class="t" style="left:2544.0px;top:829.2px;font-size:24px;line-height:24px;font-weight:400;color:#111;letter-spacing:0px">-</div>
<div class="a" style="left:0px;top:998px;width:882px;height:1px;background:#ececec"></div>
<div class="a" style="left:1194px;top:998px;width:1479px;height:1px;background:#ececec"></div>
<div class="a" style="left:14px;top:928px;width:32px;height:32px;background:#fff;border:2px solid #e2e2e2;border-radius:7px;box-sizing:border-box"></div>
<div class="a" style="left:73px;top:912px;width:66px;height:66px;background:#d15680;border-radius:50%"></div>
<div class="t" style="left:87.0px;top:929.6px;font-size:30px;line-height:30px;font-weight:400;color:#0b6be0;letter-spacing:0px">NP</div>
<div class="t" style="left:159.5px;top:933.5px;font-size:23px;line-height:23px;font-weight:700;color:#000;letter-spacing:0px">Nam Pham</div>
<div class="t" style="left:568.5px;top:932.7px;font-size:24px;line-height:24px;font-weight:400;color:#111;letter-spacing:0px">-</div>
<div class="t" style="left:1226.5px;top:932.7px;font-size:24px;line-height:24px;font-weight:400;color:#111;letter-spacing:0px">Nam</div>
<div class="t" style="left:1556.0px;top:932.7px;font-size:24px;line-height:24px;font-weight:400;color:#111;letter-spacing:0px">-</div>
<div class="t" style="left:1886.0px;top:932.7px;font-size:24px;line-height:24px;font-weight:400;color:#111;letter-spacing:0px">Pham</div>
<div class="t" style="left:2215.0px;top:932.7px;font-size:24px;line-height:24px;font-weight:400;color:#111;letter-spacing:0px">-</div>
<div class="t" style="left:2544.0px;top:932.7px;font-size:24px;line-height:24px;font-weight:400;color:#111;letter-spacing:0px">-</div>
<div class="a" style="left:14px;top:1032px;width:32px;height:32px;background:#fff;border:2px solid #e2e2e2;border-radius:7px;box-sizing:border-box"></div>
<div class="a" style="left:73px;top:1016px;width:66px;height:66px;background:#8b48c6;border-radius:50%"></div>
<div class="t" style="left:87.0px;top:1033.6px;font-size:30px;line-height:30px;font-weight:400;color:#0b6be0;letter-spacing:0px">LM</div>
<div class="t" style="left:159.5px;top:1037.5px;font-size:23px;line-height:23px;font-weight:700;color:#000;letter-spacing:0px">Liên Minh Mobile</div>
<div class="t" style="left:568.5px;top:1036.7px;font-size:24px;line-height:24px;font-weight:400;color:#111;letter-spacing:0px">-</div>
<div class="t" style="left:1226.5px;top:1036.7px;font-size:24px;line-height:24px;font-weight:400;color:#111;letter-spacing:0px">Liên Minh</div>
<div class="t" style="left:1556.0px;top:1036.7px;font-size:24px;line-height:24px;font-weight:400;color:#111;letter-spacing:0px">-</div>
<div class="t" style="left:1886.0px;top:1036.7px;font-size:24px;line-height:24px;font-weight:400;color:#111;letter-spacing:0px">Mobile</div>
<div class="t" style="left:2215.0px;top:1036.7px;font-size:24px;line-height:24px;font-weight:400;color:#111;letter-spacing:0px">-</div>
<div class="t" style="left:2544.0px;top:1036.7px;font-size:24px;line-height:24px;font-weight:400;color:#111;letter-spacing:0px">-</div>
<div class="a" style="left:924px;top:1060px;width:3px;height:3px;background:#222"></div>
<svg class="a" style="left:1070px;top:1058px" width="14" height="8" viewBox="0 0 14 8"><path d="M2 1 Q7 5 12 1" stroke="#222" stroke-width="2.4" fill="none"/></svg>
</div>
<div class="a" style="left:3121px;top:656px;width:24px;height:1075px;background:#f7f7f7"></div>
<div class="a" style="left:3128px;top:663px;width:13px;height:1037px;background:#c9c9c9;border-radius:7px"></div>
<div class="a" style="left:448px;top:1731px;width:2697px;height:24px;background:#f7f7f7"></div>
<div class="a" style="left:455px;top:1737px;width:1845px;height:14px;background:#c9c9c9;border-radius:7px"></div>
<div class="a" style="left:448px;top:1755px;width:2697px;height:45px;background:#f3f4f8"></div>
<div class="a" style="left:448px;top:1781px;width:207px;height:49px;background:#fff;border:2px solid #e3e4e9;border-radius:14px;box-sizing:border-box"></div>
<div class="a" style="left:1421px;top:1781px;width:50px;height:49px;background:#eceef2;border-radius:8px"></div>
<div class="a" style="left:1486px;top:1781px;width:52px;height:49px;background:#fff;border-radius:8px"></div>
<div class="a" style="left:1552px;top:1781px;width:52px;height:49px;background:#fff;border-radius:8px"></div>
<div class="a" style="left:1618px;top:1781px;width:52px;height:49px;background:#fff;border-radius:8px"></div>
<div class="a" style="left:1684px;top:1781px;width:52px;height:49px;background:#fff;border-radius:8px"></div>
<div class="a" style="left:1817px;top:1781px;width:57px;height:49px;background:#fff;border-radius:8px"></div>
<div class="t" style="left:1406px;width:80px;text-align:center;top:1792.7px;font-size:24px;line-height:24px;font-weight:400;color:#111">1</div>
<div class="t" style="left:1472px;width:80px;text-align:center;top:1792.7px;font-size:24px;line-height:24px;font-weight:400;color:#111">2</div>
<div class="t" style="left:1538px;width:80px;text-align:center;top:1792.7px;font-size:24px;line-height:24px;font-weight:400;color:#111">3</div>
<div class="t" style="left:1604px;width:80px;text-align:center;top:1792.7px;font-size:24px;line-height:24px;font-weight:400;color:#111">4</div>
<div class="t" style="left:1670px;width:80px;text-align:center;top:1792.7px;font-size:24px;line-height:24px;font-weight:400;color:#111">5</div>
<div class="t" style="left:1805px;width:80px;text-align:center;top:1792.7px;font-size:24px;line-height:24px;font-weight:400;color:#111">111</div>
<div class="t" style="left:1770.0px;top:1791.7px;font-size:24px;line-height:24px;font-weight:400;color:#111;letter-spacing:0px;">...</div>
<div class="a" style="left:2108px;top:1782px;width:80px;height:48px;background:#fff;border:2px solid #cfdcf5;border-radius:8px;box-sizing:border-box"></div>
<svg class="a" style="left:1295px;top:1790px;" width="110" height="12" viewBox="1295 1790 110 12" fill="none" stroke="#111" stroke-width="2.3" stroke-linecap="round" stroke-linejoin="round"><path d="M1304 1794 V1800 M1314 1800 L1319 1794 M1386 1800 L1391 1794" stroke="#444" stroke-width="2"/></svg>
<svg class="a" style="left:1910px;top:1790px;" width="90" height="12" viewBox="1910 1790 90 12" fill="none" stroke="#111" stroke-width="2.3" stroke-linecap="round" stroke-linejoin="round"><path d="M1921 1794 L1926 1800 M1980 1794 L1985 1800 M1993 1794 V1800" stroke="#444" stroke-width="2"/></svg>
</body></html>
